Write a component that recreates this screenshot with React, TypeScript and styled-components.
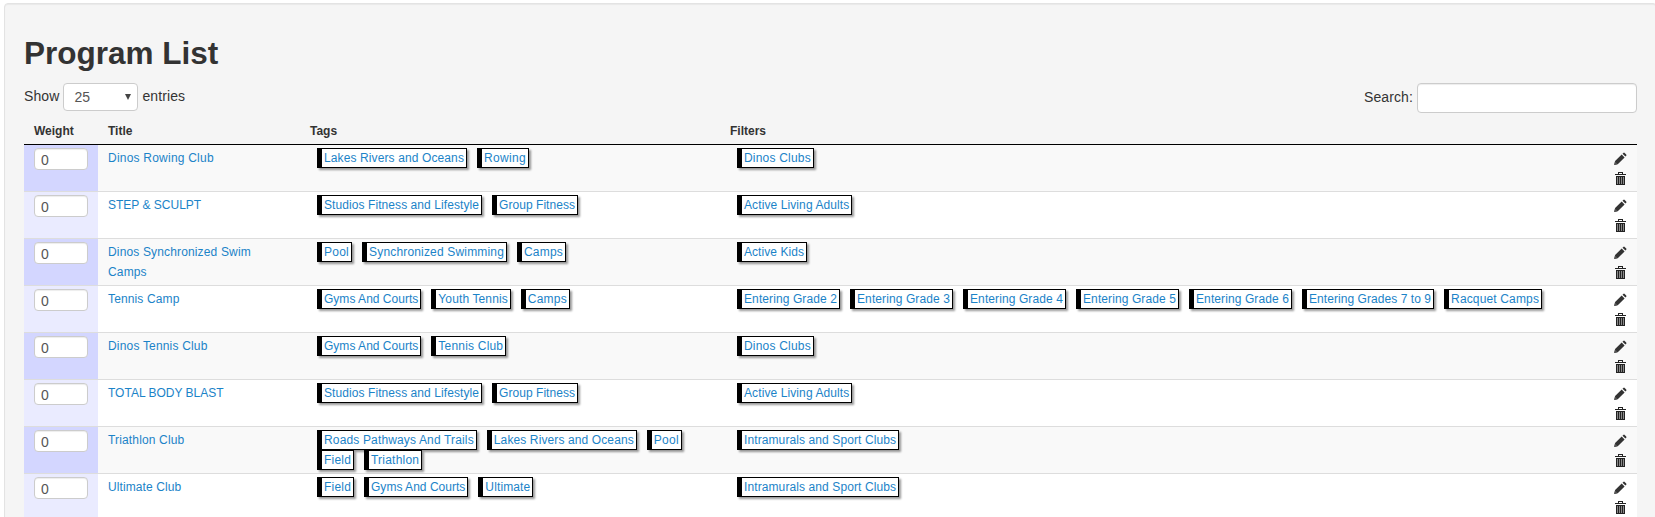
import React from "react";
import styled, { createGlobalStyle } from "styled-components";

const GlobalStyle = createGlobalStyle`
  html, body { margin: 0; padding: 0; background: #fff; }
  *, *::before, *::after { box-sizing: border-box; }
  body { font: 14px/20px "Liberation Sans", Arial, sans-serif; color: #333; }
`;

const Page = styled.div`
  height: 517px;
  overflow: hidden;
  padding: 3px 0 0 4px;
`;

const Well = styled.main`
  width: 1653px;
  min-height: 560px;
  padding: 19px;
  background: #f5f5f5;
  border: 1px solid #e3e3e3;
  border-radius: 4px;
  box-shadow: inset 0 1px 1px rgba(0, 0, 0, 0.05);
`;

const Heading = styled.h2`
  margin: 10px 0;
  height: 40px;
  font-size: 31.5px;
  line-height: 40px;
  font-weight: bold;
`;

const Controls = styled.div`
  display: flex;
  justify-content: space-between;
  height: 30px;
`;

const Label = styled.label`
  display: flex;
  align-items: flex-start;
  letter-spacing: 0.1px;
`;

const Text = styled.span<{ $top: number }>`
  padding-top: ${(p) => p.$top}px;
`;

const Select = styled.div`
  display: flex;
  justify-content: space-between;
  align-items: center;
  width: 75px;
  height: 28px;
  margin: 0 4px;
  padding: 0 6px 0 10px;
  background: #fff;
  border: 1px solid #ccc;
  border-radius: 4px;
  color: #555;
`;

const Arrow = styled.svg`
  width: 6px;
  height: 6px;
`;

const SearchInput = styled.input`
  width: 220px;
  height: 30px;
  margin-left: 4px;
  background: #fff;
  border: 1px solid #ccc;
  border-radius: 4px;
  box-shadow: inset 0 1px 1px rgba(0, 0, 0, 0.075);
`;

const Table = styled.div`
  width: 1613px;
  font-size: 12px;
`;

const Grid = styled.div`
  display: grid;
  grid-template-columns: 74px 202px 420px 1fr 44px;
`;

const HeadRow = styled(Grid)`
  height: 32px;
  border-bottom: 1px solid #000;
  font-weight: bold;
`;

const Row = styled(Grid)<{ $odd: boolean; $first: boolean }>`
  height: ${(p) => (p.$first ? 46 : 47)}px;
  background: ${(p) => (p.$odd ? "#f9f9f9" : "#fff")};
  border-top: ${(p) => (p.$first ? "none" : "1px solid #ddd")};
`;

const HeadCell = styled.div`
  padding: 8px 10px 0;
`;

const Cell = styled.div`
  padding: 3px 10px;
`;

const TitleCell = styled(Cell)`
  padding-right: 40px;
`;

const WeightCell = styled(Cell)<{ $odd: boolean }>`
  background: ${(p) => (p.$odd ? "#d3d6ff" : "#eaebff")};
`;

const WeightInput = styled.input`
  display: block;
  width: 54px;
  height: 22px;
  padding: 2px 6px 0;
  border: 1px solid #ccc;
  border-radius: 4px;
  box-shadow: inset 0 1px 1px rgba(0, 0, 0, 0.075);
  background: #fff;
  color: #555;
  font: 14px/18px "Liberation Sans", Arial, sans-serif;
`;

const Link = styled.a<{ $tracking: number }>`
  color: #1b83c8;
  letter-spacing: ${(p) => p.$tracking}px;
  text-decoration: none;
`;

const TagList = styled.div`
  display: flex;
  flex-wrap: wrap;
  column-gap: 3px;
`;

const Tag = styled(Link)`
  height: 20px;
  margin-left: 7px;
  padding: 0 2px;
  background: #fff;
  border: 1px solid #000;
  border-left-width: 5px;
  box-shadow: 2px 2px 2px rgba(0, 0, 0, 0.4);
  line-height: 18px;
  white-space: nowrap;
`;

const Actions = styled(Cell)`
  display: flex;
  flex-direction: column;
  align-items: flex-end;
  padding-top: 7px;
  gap: 5px;
`;

const Icon = styled.svg`
  display: block;
  width: 14px;
  height: 14px;
`;

const Pencil = () => (
  <Icon viewBox="0 0 14 14" fill="#333">
    <path d="M2.1 9.1 8.7 2.5l2.9 2.9L5 12 1 13.1zM9.5 1.7l.8-.8q.7-.6 1.4 0l1.5 1.5q.6.7 0 1.4l-.8.8z" />
    <path d="m2 9.5 2.7 2.7-3 .7z" fill="#555" />
  </Icon>
);

const Trash = () => (
  <Icon viewBox="0 0 14 14" shapeRendering="crispEdges">
    <path d="M5 1h5v2H9V2H6v1H5zM2 3h11v1H2zM3 5h9v9H3z" fill="#222" />
    <path d="M4 6h1v7H4zM6 6h1v7H6zM8 6h1v7H8zM10 6h1v7h-1z" fill="#888" />
  </Icon>
);

const tracking: Record<string, number> = {
  "Lakes Rivers and Oceans": 0.113,
  Rowing: 0.33,
  "Studios Fitness and Lifestyle": 0.078,
  "Group Fitness": 0.05,
  Pool: 0.25,
  "Synchronized Swimming": 0.17,
  Camps: 0.2,
  "Entering Grades 7 to 9": 0.06,
  "Racquet Camps": 0.15,
  "Roads Pathways And Trails": 0.15,
  Field: 0.2,
  Triathlon: 0.22,
  "Gyms And Courts": 0.02,
  Ultimate: 0.125,
  "Youth Tennis": 0.12,
  "Tennis Club": 0.2,
  "Dinos Clubs": 0.2,
  "Active Kids": 0.06,
  "Dinos Rowing Club": 0.22,
  "STEP & SCULPT": 0,
  "Dinos Synchronized Swim Camps": 0.15,
  "Tennis Camp": 0.13,
  "Dinos Tennis Club": 0.18,
  "TOTAL BODY BLAST": 0,
  "Triathlon Club": 0.15,
};

const trackingOf = (label: string) => tracking[label] ?? 0.1;

const programs = [
  { title: "Dinos Rowing Club", tags: ["Lakes Rivers and Oceans", "Rowing"], filters: ["Dinos Clubs"] },
  { title: "STEP & SCULPT", tags: ["Studios Fitness and Lifestyle", "Group Fitness"], filters: ["Active Living Adults"] },
  { title: "Dinos Synchronized Swim Camps", tags: ["Pool", "Synchronized Swimming", "Camps"], filters: ["Active Kids"] },
  {
    title: "Tennis Camp",
    tags: ["Gyms And Courts", "Youth Tennis", "Camps"],
    filters: [
      "Entering Grade 2",
      "Entering Grade 3",
      "Entering Grade 4",
      "Entering Grade 5",
      "Entering Grade 6",
      "Entering Grades 7 to 9",
      "Racquet Camps",
    ],
  },
  { title: "Dinos Tennis Club", tags: ["Gyms And Courts", "Tennis Club"], filters: ["Dinos Clubs"] },
  { title: "TOTAL BODY BLAST", tags: ["Studios Fitness and Lifestyle", "Group Fitness"], filters: ["Active Living Adults"] },
  {
    title: "Triathlon Club",
    tags: ["Roads Pathways And Trails", "Lakes Rivers and Oceans", "Pool", "Field", "Triathlon"],
    filters: ["Intramurals and Sport Clubs"],
  },
  { title: "Ultimate Club", tags: ["Field", "Gyms And Courts", "Ultimate"], filters: ["Intramurals and Sport Clubs"] },
];

const Tags = ({ items }: { items: string[] }) => (
  <TagList>
    {items.map((t) => (
      <Tag key={t} $tracking={trackingOf(t)}>
        {t}
      </Tag>
    ))}
  </TagList>
);

export default function App() {
  return (
    <Page>
      <GlobalStyle />
      <Well>
        <Heading>Program List</Heading>
        <Controls>
          <Label>
            <Text $top={3}>Show</Text>
            <Select>
              <span>25</span>
              <Arrow viewBox="0 0 6 6">
                <path d="M0 0h6L3 6z" fill="#444" />
              </Arrow>
            </Select>
            <Text $top={3}>entries</Text>
          </Label>
          <Label>
            <Text $top={4}>Search:</Text>
            <SearchInput />
          </Label>
        </Controls>
        <Table>
          <HeadRow>
            <HeadCell>Weight</HeadCell>
            <HeadCell>Title</HeadCell>
            <HeadCell>Tags</HeadCell>
            <HeadCell>Filters</HeadCell>
          </HeadRow>
          {programs.map((p, i) => (
            <Row key={p.title} $odd={i % 2 === 0} $first={i === 0}>
              <WeightCell $odd={i % 2 === 0}>
                <WeightInput defaultValue="0" />
              </WeightCell>
              <TitleCell>
                <Link $tracking={trackingOf(p.title)}>{p.title}</Link>
              </TitleCell>
              <Cell>
                <Tags items={p.tags} />
              </Cell>
              <Cell>
                <Tags items={p.filters} />
              </Cell>
              <Actions>
                <Pencil />
                <Trash />
              </Actions>
            </Row>
          ))}
        </Table>
      </Well>
    </Page>
  );
}
